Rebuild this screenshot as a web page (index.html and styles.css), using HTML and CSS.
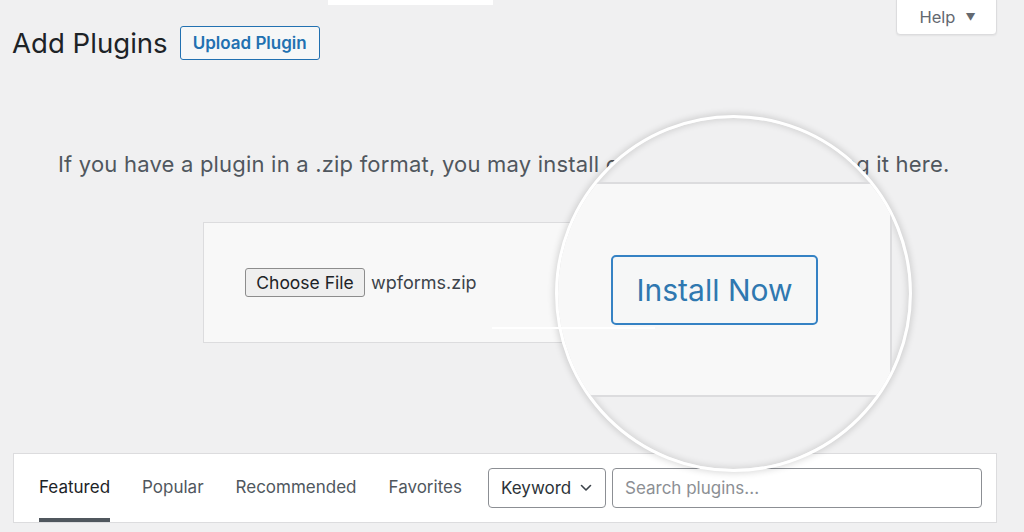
FILE: index.html
```html
<!DOCTYPE html>
<html lang="en">
<head>
<meta charset="utf-8">
<title>Add Plugins</title>
<link rel="stylesheet" href="styles.css">
</head>
<body>
<div class="top-strip"></div>
<div class="wrap">
  <header class="page-head">
    <div class="title-row">
      <h1 class="title">Add Plugins</h1>
      <button class="upload-btn" type="button">Upload Plugin</button>
    </div>
    <button class="help-tab" type="button">Help <span class="help-arrow">&#9660;</span></button>
  </header>

  <p class="upload-desc">If you have a plugin in a .zip format, you may install or update it by uploading it here.</p>

  <div class="upload-box">
    <span class="choose-btn">Choose File</span>
    <span class="file-name">wpforms.zip</span>
  </div>

  <div class="filter-bar">
    <ul class="tabs">
      <li class="tab tab-current">Featured</li>
      <li class="tab">Popular</li>
      <li class="tab">Recommended</li>
      <li class="tab">Favorites</li>
    </ul>
    <div class="search-form">
      <div class="select">Keyword
        <svg class="chev" width="12" height="8" viewBox="0 0 12 8"><path d="M1.5 1.5 6 6l4.5-4.5" fill="none" stroke="#3c434a" stroke-width="1.6" stroke-linecap="round" stroke-linejoin="round"/></svg>
      </div>
      <div class="search-input">Search plugins...</div>
    </div>
  </div>
</div>

<div class="lens">
  <div class="lens-box">
    <span class="install-btn">Install Now</span>
  </div>
</div>
<div class="glint"></div>
</body>
</html>
```
FILE: styles.css
```css
* { box-sizing: border-box; }
html, body { margin: 0; padding: 0; }
body {
  background: #f0f0f1;
  font-family: Inter, "Noto Sans", "Liberation Sans", sans-serif;
  color: #1d2327;
  width: 1024px;
  height: 532px;
  overflow: hidden;
  position: relative;
}
.top-strip {
  position: absolute;
  left: 328px;
  top: 0;
  width: 165px;
  height: 5px;
  background: #fff;
}
.page-head {
  display: flex;
  align-items: flex-start;
  justify-content: space-between;
  padding-left: 12px;
  padding-right: 27px;
}
.title-row {
  display: flex;
  align-items: center;
  gap: 12px;
  margin-top: 26px;
}
.title {
  margin: 0;
  font-size: 27.6px;
  font-weight: 400;
  line-height: 34px;
  color: #1d2327;
}
.upload-btn {
  height: 34px;
  width: 140px;
  padding: 0;
  border: 1px solid #2271b1;
  border-radius: 3px;
  background: #f6f7f7;
  color: #2271b1;
  font-family: inherit;
  font-size: 17px;
  font-weight: 600;
}
.help-tab {
  width: 101px;
  height: 36px;
  margin-top: -1px;
  background: #fff;
  border: 1px solid #dcdcde;
  border-radius: 0 0 4px 4px;
  box-shadow: 0 1px 2px rgba(0,0,0,.06);
  color: #646970;
  font-family: inherit;
  font-size: 16.5px;
  padding: 0 0 0 2px;
  display: flex;
  align-items: center;
  justify-content: center;
  gap: 10px;
}
.help-arrow { font-size: 10px; color: #646970; }

.upload-desc {
  margin: 90px 0 0 58px;
  font-size: 22px;
  line-height: 28px;
  letter-spacing: 0.2px;
  color: #50575e;
  white-space: nowrap;
}
.upload-box {
  margin: 44px 0 0 203px;
  width: 620px;
  height: 121px;
  background: #f8f8f8;
  border: 1px solid #dcdcde;
  display: flex;
  align-items: center;
  padding-left: 41px;
  gap: 6px;
}
.choose-btn {
  display: inline-flex;
  align-items: center;
  justify-content: center;
  width: 120px;
  height: 29px;
  background: #efefef;
  border: 1px solid #8d8d8d;
  border-radius: 3px;
  font-size: 17.5px;
  color: #1d2327;
}
.file-name { font-size: 18px; color: #3c434a; }

.filter-bar {
  margin: 110px 0 0 13px;
  width: 984px;
  height: 70px;
  background: #fff;
  border: 1px solid #dcdcde;
  display: flex;
  align-items: stretch;
  padding: 0 14px 0 25px;
}
.tabs {
  list-style: none;
  margin: 0;
  padding: 0;
  display: flex;
  gap: 32px;
}
.tab {
  display: flex;
  align-items: center;
  font-size: 17px;
  color: #50575e;
  border-bottom: 4px solid transparent;
  padding-top: 1px;
}
.tab-current { color: #1d2327; border-bottom-color: #50575e; }
.search-form {
  margin-left: auto;
  display: flex;
  align-items: center;
  gap: 6px;
}
.select {
  width: 118px;
  height: 40px;
  border: 1px solid #8c8f94;
  border-radius: 4px;
  display: flex;
  align-items: center;
  padding-left: 12px;
  font-size: 17px;
  color: #2c3338;
  gap: 9px;
}
.search-input {
  width: 370px;
  height: 40px;
  border: 1px solid #8c8f94;
  border-radius: 4px;
  display: flex;
  align-items: center;
  padding-left: 12px;
  font-size: 17px;
  color: #8c8f94;
}

.lens {
  position: absolute;
  left: 555px;
  top: 115px;
  width: 357px;
  height: 357px;
  border-radius: 50%;
  border: 3px solid #fff;
  background: #f0f0f1;
  overflow: hidden;
  box-shadow: 0 0 7px 1px rgba(0,0,0,.16), inset 0 0 7px 1px rgba(0,0,0,.14);
}
.lens-box {
  margin: 64px 0 0 -60px;
  width: 394px;
  height: 215px;
  background: #f8f8f8;
  border: 2px solid #dcdcde;
  display: flex;
  align-items: center;
}
.install-btn {
  margin-left: 111px;
  width: 207px;
  height: 70px;
  display: inline-flex;
  align-items: center;
  justify-content: center;
  border: 2px solid #3582c4;
  border-radius: 5px;
  background: #f6f7f7;
  color: #2f78b0;
  font-size: 30px;
  font-weight: 400;
}
.glint {
  position: absolute;
  left: 492px;
  top: 327px;
  width: 163px;
  height: 2px;
  background: #fff;
}
```
